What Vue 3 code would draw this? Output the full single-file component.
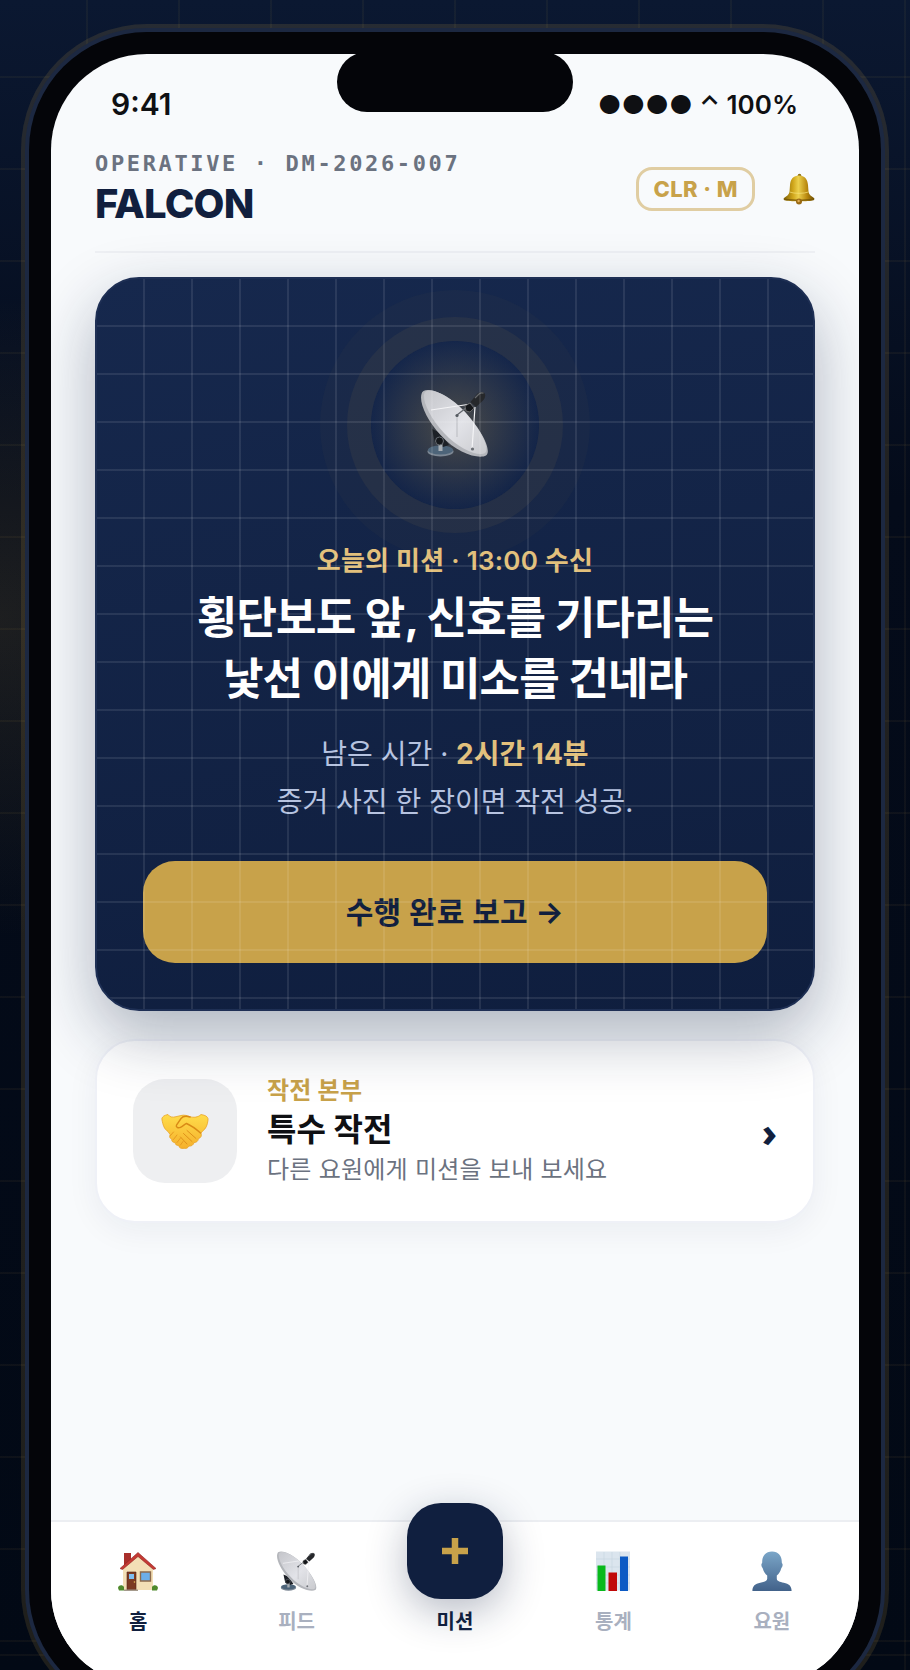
<template>
  <div class="stage">
    <div class="phone">
      <div class="screen">
        <div class="notch"></div>

        <div class="status">
          <span class="status__time">9:41</span>
          <span class="status__right">●●●● ⌃ 100%</span>
        </div>

        <header class="header">
          <div>
            <p class="header__id">OPERATIVE · DM-2026-007</p>
            <h1 class="header__name">FALCON</h1>
          </div>
          <div class="header__side">
            <span class="badge">CLR · M</span>
            <button class="bell" type="button" aria-label="알림">
              <svg viewBox="0 0 32 32" width="32" height="32">
                <defs>
                  <linearGradient id="bellGold" x1="0" x2="1" y1="0" y2="0">
                    <stop offset="0" stop-color="#7d6008" />
                    <stop offset="0.3" stop-color="#cfa51a" />
                    <stop offset="0.48" stop-color="#ecd04c" />
                    <stop offset="0.75" stop-color="#bb8a0f" />
                    <stop offset="1" stop-color="#6d4e05" />
                  </linearGradient>
                </defs>
                <circle cx="16.5" cy="2.6" r="1.8" fill="#8f7014" />
                <path d="M16 2.5c5.6 0 8.6 3.600 9 9.500l.5 6.500c.3 3 2.500 4.500 5.500 6.500.6.5.5 2-.4 2.200C26 28.600 6 28.600 1.400 27.200.5 27 .4 25.500 1 25c3-2 5.200-3.500 5.500-6.500l.5-6.500c.4-5.900 3.400-9.500 9-9.500z" fill="url(#bellGold)" />
                <path d="M6.500 19c5 1.800 14 1.800 19 0" fill="none" stroke="#f6e27a" stroke-width="1" opacity=".7" />
                <path d="M1.500 26.200c7 1.500 22 1.500 29 0" fill="none" stroke="#7a5a08" stroke-width="1.200" />
                <circle cx="16" cy="28.500" r="3" fill="#9b6a14" />
                <circle cx="15.600" cy="28" r="1.200" fill="#e0ae55" />
              </svg>
            </button>
          </div>
        </header>

        <main class="content">
          <section class="mission">
            <div class="radar">
              <svg class="radar__dish" viewBox="0 0 68 68">
                <use href="#dish" />
              </svg>
            </div>
            <p class="mission__label">오늘의 미션 · 13:00 수신</p>
            <h2 class="mission__title">횡단보도 앞, 신호를 기다리는<br />낯선 이에게 미소를 건네라</h2>
            <p class="mission__text">
              남은 시간 · <strong>2시간 14분</strong><br />증거 사진 한 장이면 작전 성공.
            </p>
            <button class="mission__button" type="button">수행 완료 보고 →</button>
          </section>

          <a class="ops" href="#ops">
            <span class="ops__icon">
              <svg viewBox="0 0 48 36" width="48" height="36">
                <defs>
                  <linearGradient id="skin" x1="0" x2="0" y1="0" y2="1">
                    <stop offset="0" stop-color="#ffdc4a" />
                    <stop offset="1" stop-color="#f5b02c" />
                  </linearGradient>
                </defs>
                <path d="M1 7C.3 5 2 3 4.500 2.200L7 1.500c1.500 2.500 4.500 3.200 8 2.200l5-1.200c3-.8 6 0 9 1.200 3.500 1 8 .8 11-2.200l3 .7c3 .8 4.500 3 4 5-.6 5-2 8.500-5.500 11L40 20c1 2.600 0 5-2.600 5.600-.2 2.600-2 4-4.400 4-.6 2.500-2.600 3.800-5 3.400-1 2-3 3-4.800 2.300-3.500.7-5.400-.8-5.400-2.800-2 .3-3.800-1-3.600-3-2.200.2-4-1.400-3.400-3.400-2-.6-2.800-2.600-1.600-4.400L7 18.500C3 16 2 12 1 7z" fill="url(#skin)" stroke="#e9a326" stroke-width=".8" />
                <path d="M29 4c-4-1.200-7-1-9 1.500l-4.500 6.500c-1 2 1.500 3.400 4 2.300 2.400-1 3.800-3 6-3.800 3.500 1.500 9 5 14 9.500" fill="none" stroke="#d98a16" stroke-width="1.400" stroke-linecap="round" />
                <path d="M26 17.500l9 8M22.500 20.500l8.500 8M19.500 24l6.500 7" fill="none" stroke="#df9119" stroke-width="1" stroke-linecap="round" />
                <path d="M9.500 22.500l3-3.500M12.500 26.500l3.500-4.500M16 29.500l3.500-4.500M19.500 32l2.500-3.500" fill="none" stroke="#e79a20" stroke-width="1" stroke-linecap="round" />
              </svg>
            </span>
            <span class="ops__body">
              <span class="ops__label">작전 본부</span>
              <span class="ops__title">특수 작전</span>
              <span class="ops__desc">다른 요원에게 미션을 보내 보세요</span>
            </span>
            <span class="ops__arrow">›</span>
          </a>
        </main>

        <nav class="tabs">
          <a
            v-for="tab in tabs"
            :key="tab.id"
            class="tab"
            :class="{ active: tab.id === current || tab.id === 'mission' }"
            :href="'#' + tab.id"
            @click.prevent="current = tab.id"
          >
            <span v-if="tab.id === 'mission'" class="tab__fab">
              <svg viewBox="0 0 26 26" width="26" height="26">
                <path d="M13 0v26M0 13h26" stroke="#c8a24a" stroke-width="6.500" />
              </svg>
            </span>
            <svg v-else class="tab__icon" viewBox="0 0 40 40">
              <g v-if="tab.id === 'home'">
                <path d="M6 2h7v12H6z" fill="#a92f2b" />
                <path d="M5 16L20 4l15 12v23H5z" fill="#f3dfb6" />
                <path d="M2 17.500L20 1.500l18 16-2.500 1L20 5.500 4.500 18.500z" fill="#c43a34" stroke="#8f2320" stroke-width=".6" />
                <path d="M9 21h9v18H9z" fill="#7c3a22" stroke="#54271a" stroke-width=".6" />
                <path d="M11 23h5v5h-5z" fill="#7fbdf0" />
                <path d="M22.500 21h10v9h-10z" fill="#6caee8" stroke="#8c6a4c" stroke-width="1.400" />
                <circle cx="16.500" cy="31" r=".8" fill="#e8c25a" />
                <path d="M6 38.500h14V40H6z" fill="#a59a8c" />
                <path d="M0 37c0-3 4.500-4 6-1v3.500H1zM34 39.500V36c1.500-3 6-2 6 1l-1 2.500z" fill="#4f8a2c" />
              </g>
              <use v-else-if="tab.id === 'feed'" href="#dish" transform="scale(.588)" />
              <g v-else-if="tab.id === 'stats'">
                <path d="M3 .5h34v39H3z" fill="#dbe5ee" />
                <path d="M3 8h34M3 16h34M3 24h34M3 32h34M11 1v38M19 1v38M27 1v38" stroke="#c6d3df" stroke-width=".6" />
                <path d="M4.500 14.500h8V40h-8z" fill="#08b91c" />
                <path d="M15.500 21.500h8.500V40h-8.500z" fill="#c00808" />
                <path d="M27 5.500h8V40h-8z" fill="#0b5ac4" />
              </g>
              <g v-else>
                <defs>
                  <linearGradient id="bust" x1="0" x2="0" y1="0" y2="1">
                    <stop offset="0" stop-color="#7ba6c8" />
                    <stop offset="1" stop-color="#42628a" />
                  </linearGradient>
                </defs>
                <path d="M20 .5c6.500 0 10 4.500 9.800 11 0 .8 1 1 .8 2.800-.2 2-1.200 2.400-1.500 3.500-.6 3-2.300 5-4.300 6.800v3.200c0 2.500 3 3 7 4 5 1.200 7.800 3 7.800 8.200H.4c0-5.200 2.800-7 7.800-8.200 4-1 7-1.500 7-4v-3.200c-2-1.800-3.700-3.800-4.300-6.800-.3-1.100-1.300-1.500-1.500-3.500-.2-1.800.8-2 .8-2.800C10 5 13.500.5 20 .5z" fill="url(#bust)" />
              </g>
            </svg>
            <span class="tab__name">{{ tab.name }}</span>
          </a>
        </nav>
      </div>
    </div>

    <!-- shared satellite dish symbol -->
    <svg class="sprite" aria-hidden="true">
      <defs>
        <linearGradient id="dishFace" x1="0" x2="1" y1="0" y2="1">
          <stop offset="0" stop-color="#c4c5ca" />
          <stop offset="0.55" stop-color="#e2e3e8" />
          <stop offset="1" stop-color="#c9cace" />
        </linearGradient>
        <symbol id="dish" viewBox="0 0 68 68" width="68" height="68" overflow="visible">
          <ellipse cx="19.500" cy="62.500" rx="13" ry="5" fill="#7c8794" />
          <ellipse cx="19.500" cy="61" rx="12.500" ry="4.500" fill="#4d6479" />
          <path d="M11 40l9 4 8 12-6 2-8-4z" fill="#1c2026" />
          <path d="M17.500 54h4v8h-4z" fill="#a9afb5" />
          <circle cx="18.500" cy="52" r="4" fill="#15181c" stroke="#676c72" stroke-width="1" />
          <path d="M.5 5C2-4 24 2 42 21c20 21 29 41 23 45.500-7 4-29-2-45-20C6 31-2 14 .5 5z" fill="#b4b6bb" />
          <path d="M4 3c6-5 24 3 40 20 17 19 25 37 20 41-6 4-25-3-41-20S0 8 4 3z" fill="url(#dishFace)" />
          <path d="M10 21l40-6M54 18l-3 42" fill="none" stroke="#f4f4f6" stroke-width="1.200" />
          <path d="M50 15L36 26v22" fill="none" stroke="#b9bbc0" stroke-width="1" />
          <path d="M50 15L36 26" stroke="#62666c" stroke-width="1.200" />
          <circle cx="36" cy="26.500" r="1.600" fill="#555a61" />
          <circle cx="51.500" cy="60" r="1.600" fill="#6a6e74" />
          <path d="M44 17l5-3 4 5-4 4-4-1z" fill="#15171a" stroke="#777" stroke-width=".8" />
          <path d="M49.500 13l6.500-8c2-2 7-2.500 8 0 .8 2-.5 5-2 6.500L55 18z" fill="#26282b" />
          <path d="M54 9l4-4c1.500-1.200 3.500-1.300 4.500-.8" fill="none" stroke="#65686c" stroke-width="1.200" />
        </symbol>
      </defs>
    </svg>
  </div>
</template>

<script setup>
import { ref } from 'vue';

const current = ref('home');

const tabs = [
  { id: 'home', name: '홈' },
  { id: 'feed', name: '피드' },
  { id: 'mission', name: '미션' },
  { id: 'stats', name: '통계' },
  { id: 'agent', name: '요원' },
];
</script>

<style>
body {
  margin: 0;
  background: #040b18;
}
</style>

<style scoped>
.stage {
  height: 100vh;
  box-sizing: border-box;
  padding: 32px 29px 0;
  overflow: hidden;
  font-family: Inter, "Noto Sans CJK KR", sans-serif;
  color: #0f1013;
  background:
    repeating-linear-gradient(90deg, rgba(200, 162, 74, 0.06) 0 2px, transparent 2px 92px) -6px 0,
    repeating-linear-gradient(180deg, rgba(200, 162, 74, 0.06) 0 2px, transparent 2px 92px) 0 -16px,
    radial-gradient(circle at 0 37%, rgba(200, 162, 74, 0.13), transparent 320px),
    linear-gradient(180deg, #0b1831 0, #040b1a 500px, #020915 100%);
}

.phone {
  height: calc(100vh + 6px);
  box-sizing: border-box;
  padding: 22px;
  border-radius: 118px;
  background: #040509;
  box-shadow: 0 0 0 4px #1c2841, 0 0 0 8px rgba(200, 162, 74, 0.15);
}

.screen {
  position: relative;
  display: flex;
  flex-direction: column;
  height: 100%;
  border-radius: 96px;
  overflow: hidden;
  background: #f8fafc;
}

.notch {
  position: absolute;
  top: -2px;
  left: 50%;
  width: 236px;
  height: 60px;
  margin-left: -118px;
  border-radius: 30px;
  background: #040509;
}

.status {
  display: flex;
  justify-content: space-between;
  align-items: center;
  padding: 31px 61px 1px 60px;
  height: 38px;
  font-weight: 600;
}

.status__time {
  font-size: 30px;
}

.status__right {
  font-size: 26px;
}

p,
h1,
h2 {
  margin: 0;
}

.header {
  display: flex;
  justify-content: space-between;
  align-items: center;
  margin: 0 44px;
  padding: 26px 0 23px;
  border-bottom: 2px solid #eef0f4;
}

.header__id {
  font: bold 22px/28px "DejaVu Sans Mono", monospace;
  letter-spacing: 0.12em;
  color: #6b7280;
}

.header__name {
  margin-top: 2px;
  font-size: 40px;
  line-height: 48px;
  font-weight: 800;
  letter-spacing: -0.02em;
  color: #111f3e;
}

.header__side {
  display: flex;
  align-items: center;
  gap: 28px;
}

.badge {
  padding: 6px 14px;
  border: 3px solid #e0cda2;
  border-radius: 16px;
  font-size: 22px;
  line-height: 26px;
  font-weight: 800;
  letter-spacing: 0.02em;
  color: #c8a24a;
}

.bell {
  display: flex;
  padding: 0;
  border: 0;
  background: none;
  cursor: pointer;
}

.content {
  flex: 1;
  display: flex;
  flex-direction: column;
  gap: 28px;
  padding: 24px 44px;
}

.mission {
  position: relative;
  display: flex;
  flex-direction: column;
  align-items: center;
  padding: 62px 46px 46px;
  border: 2px solid #1e2f54;
  border-radius: 44px;
  overflow: hidden;
  text-align: center;
  background: linear-gradient(170deg, #16284d, #0f1e3e);
  box-shadow: 0 24px 64px rgba(17, 31, 62, 0.32);
}

/* grid runs over the whole card, button included */
.mission::after {
  content: "";
  position: absolute;
  inset: 0;
  pointer-events: none;
  background:
    repeating-linear-gradient(90deg, transparent 0 46px, rgba(255, 255, 255, 0.09) 46px 48px),
    repeating-linear-gradient(180deg, transparent 0 46px, rgba(255, 255, 255, 0.09) 46px 48px);
}

.radar {
  display: flex;
  align-items: center;
  justify-content: center;
  width: 168px;
  height: 168px;
  border-radius: 50%;
  background: radial-gradient(circle closest-side, rgba(200, 162, 74, 0.3), transparent);
  box-shadow: 0 0 0 24px rgba(200, 162, 74, 0.07), 0 0 0 51px rgba(200, 162, 74, 0.03);
}

.radar__dish {
  width: 68px;
  height: 68px;
  margin-bottom: 4px;
}

.mission__label {
  margin-top: 33px;
  font-size: 26px;
  line-height: 38px;
  font-weight: 600;
  letter-spacing: 0.01em;
  color: #e2c07c;
}

.mission__title {
  margin-top: 8px;
  font-size: 44px;
  line-height: 61px;
  font-weight: 700;
  letter-spacing: -0.02em;
  color: #fff;
}

.mission__text {
  margin-top: 20px;
  font-size: 28px;
  line-height: 48px;
  color: #b6c3e0;
}

.mission__text strong {
  font-weight: 700;
  color: #e2c07c;
}

.mission__button {
  align-self: stretch;
  height: 102px;
  margin-top: 35px;
  border: 0;
  border-radius: 32px;
  font: 700 30px/40px Inter, "Noto Sans CJK KR", sans-serif;
  letter-spacing: 0.01em;
  color: #111f3e;
  background: #c8a24a;
  cursor: pointer;
}

.ops {
  display: flex;
  align-items: center;
  gap: 30px;
  padding: 32px 36px;
  border: 2px solid #eff1f7;
  border-radius: 40px;
  color: inherit;
  text-decoration: none;
  background: #fff;
  box-shadow: 0 8px 32px rgba(17, 31, 62, 0.06);
}

.ops__icon {
  display: flex;
  align-items: center;
  justify-content: center;
  width: 104px;
  height: 104px;
  border-radius: 32px;
  background: #eeeff1;
}

.ops__body {
  flex: 1;
  display: flex;
  flex-direction: column;
}

.ops__label {
  font-size: 24px;
  line-height: 36px;
  font-weight: 700;
  letter-spacing: 0.01em;
  color: #c8a24a;
}

.ops__title {
  font-size: 32px;
  line-height: 42px;
  font-weight: 700;
}

.ops__desc {
  font-size: 24px;
  line-height: 38px;
  letter-spacing: 0.01em;
  color: #6b7280;
}

.ops__arrow {
  font-family: "Noto Sans", sans-serif;
  font-size: 40px;
  font-weight: 800;
  color: #111f3e;
}

.tabs {
  display: grid;
  grid-template-columns: repeat(5, 1fr);
  height: 164px;
  padding: 0 8px;
  border-top: 2px solid #eceef2;
  background: #fff;
}

.tab {
  display: flex;
  flex-direction: column;
  align-items: center;
  padding-top: 29px;
  font-size: 20px;
  line-height: 28px;
  font-weight: 600;
  color: #a9b0bf;
  text-decoration: none;
}

.tab.active {
  color: #111f3e;
}

.tab__icon {
  width: 40px;
  height: 40px;
}

.tab__name {
  margin-top: 17px;
}

.tab__fab {
  display: flex;
  align-items: center;
  justify-content: center;
  width: 96px;
  height: 96px;
  margin: -48px 0 -8px;
  border-radius: 34px;
  background: #101f3f;
  box-shadow: 0 12px 40px rgba(17, 31, 62, 0.3);
}

.sprite {
  position: absolute;
  width: 0;
  height: 0;
}
</style>
